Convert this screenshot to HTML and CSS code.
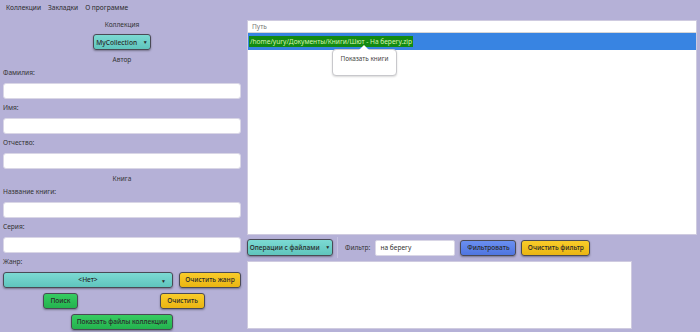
FILE: index.html
```html
<!DOCTYPE html>
<html lang="ru">
<head>
  <meta charset="UTF-8" />
  <title>Библиотека</title>
  <link rel="stylesheet" href="styles.css">
</head>
<body>
  <nav class="menubar">
    <span class="menu-item">Коллекции</span>
    <span class="menu-item">Закладки</span>
    <span class="menu-item">О программе</span>
  </nav>
  <div class="main">
    <!-- Search form -->
    <aside class="left">
      <div class="title first">Коллекция</div>
      <div class="center-row">
        <button class="btn teal collection-btn">MyCollection <span class="arrow">▼</span></button>
      </div>
      <div class="title">Автор</div>
      <label class="field-label tight">Фамилия:</label>
      <input class="field" type="text">
      <label class="field-label">Имя:</label>
      <input class="field" type="text">
      <label class="field-label">Отчество:</label>
      <input class="field" type="text">
      <div class="title">Книга</div>
      <label class="field-label tight">Название книги:</label>
      <input class="field" type="text">
      <label class="field-label">Серия:</label>
      <input class="field" type="text">
      <label class="field-label">Жанр:</label>
      <div class="genre-row">
        <button class="btn teal genre-combo"><span>&lt;Нет&gt;</span><span class="arrow combo-arrow">▼</span></button>
        <button class="btn yellow clear-genre">Очистить жанр</button>
      </div>
      <div class="search-row">
        <button class="btn green search-btn">Поиск</button>
        <button class="btn yellow clear-btn">Очистить</button>
      </div>
      <div class="center-row show-row">
        <button class="btn green show-btn">Показать файлы коллекции</button>
      </div>
    </aside>

    <!-- Files -->
    <section class="right">
      <div class="table">
        <div class="table-head">Путь</div>
        <div class="table-row selected">
          <span class="path-hl">/home/yury/Документы/Книги/Шют - На берегу.zip</span>
        </div>
        <div class="tooltip">Показать книги</div>
      </div>
      <div class="toolbar">
        <button class="btn teal ops-btn">Операции с файлами <span class="arrow">▼</span></button>
        <span class="separator"></span>
        <span class="filter-label">Фильтр:</span>
        <input class="filter-input" type="text" value="на берегу">
        <button class="btn blue filter-btn">Фильтровать</button>
        <button class="btn yellow clear-filter">Очистить фильтр</button>
      </div>
      <div class="books-box"></div>
    </section>
  </div>
</body>
</html>
```

FILE: styles.css
```css
* {
  margin: 0;
  padding: 0;
  box-sizing: border-box;
}

body {
  width: 700px;
  height: 332px;
  overflow: hidden;
  background: #b5b1d7;
  font-family: "Noto Sans", "Open Sans", sans-serif;
  font-size: 6.6px;
  line-height: 12px;
  color: #333;
}

/* Menu */
.menubar {
  display: flex;
  gap: 7px;
  height: 16px;
  padding: 0 6px;
  align-items: center;
}
.menu-item {
  line-height: 12px;
  color: #2a2a2a;
}

.main {
  display: flex;
}

/* Left panel */
.left {
  width: 244px;
  padding: 3px 3px 0 3px;
  display: flex;
  flex-direction: column;
}
.title {
  text-align: center;
  line-height: 12px;
  height: 12px;
  margin-top: 4px;
  color: #333;
}
.title.first {
  margin-top: 0;
}
.center-row {
  display: flex;
  justify-content: center;
  margin-top: 3px;
}
.field-label {
  display: block;
  line-height: 12px;
  height: 12px;
  margin-top: 3px;
  color: #333;
}
.field-label.tight {
  margin-top: 1px;
}
.field {
  display: block;
  width: 238px;
  height: 16px;
  margin-top: 4px;
  border: 1px solid #d9d6e6;
  border-radius: 3px;
  background: #fff;
  outline: none;
}

/* Buttons */
.btn {
  font-family: inherit;
  font-size: 6.6px;
  font-weight: 500;
  line-height: 12px;
  height: 16px;
  border: 1px solid #4a4a55;
  border-radius: 3px;
  color: #2a2a2a;
  cursor: pointer;
  box-shadow: 0 1px 2px rgba(0, 0, 0, 0.35);
  padding: 0;
  white-space: nowrap;
}
.teal {
  background: linear-gradient(#7cdad3, #5fc5bd);
}
.yellow {
  background: linear-gradient(#f9cc2a, #eab512);
}
.green {
  background: linear-gradient(#36cc62, #24b24e);
}
.blue {
  background: linear-gradient(#6a8ff0, #4f75e0);
}
.arrow {
  font-size: 5px;
  margin-left: 4px;
  vertical-align: 1px;
}

.collection-btn {
  width: 58px;
}

.genre-row {
  display: flex;
  justify-content: space-between;
  margin-top: 4px;
}
.genre-combo {
  width: 170px;
  display: flex;
  align-items: center;
  justify-content: center;
  position: relative;
}
.combo-arrow {
  position: absolute;
  right: 6px;
  top: 2px;
}
.clear-genre {
  width: 62px;
}
.search-row {
  display: flex;
  margin-top: 5px;
  padding-left: 40px;
}
.search-btn {
  width: 35px;
}
.clear-btn {
  width: 45px;
  margin-left: 82px;
}
.show-row {
  margin-top: 5px;
}
.show-btn {
  width: 102px;
}

/* Right panel */
.right {
  flex: 1;
  padding: 4px 3px 0 3px;
  display: flex;
  flex-direction: column;
}
.table {
  position: relative;
  height: 215px;
  background: #fff;
  border: 1px solid #cfcbe0;
}
.table-head {
  height: 12px;
  line-height: 11px;
  padding-left: 4px;
  color: #777;
  border-bottom: 1px solid #d6d6d6;
}
.table-row.selected {
  height: 17px;
  background: #3884e2;
  display: flex;
  align-items: center;
  padding-left: 1px;
}
.path-hl {
  background: #138a13;
  color: #d6f5b0;
  line-height: 11px;
  padding: 0 1px;
}
.tooltip {
  position: absolute;
  left: 84px;
  top: 28px;
  width: 65px;
  height: 27px;
  background: #fff;
  border: 1px solid #c8c8cc;
  border-radius: 4px;
  box-shadow: 0 1px 2px rgba(0, 0, 0, 0.15);
  text-align: center;
  padding-top: 3px;
  font-size: 6.4px;
  color: #444;
}
.tooltip::before {
  content: "";
  position: absolute;
  left: 26px;
  top: -5px;
  border-left: 5px solid transparent;
  border-right: 5px solid transparent;
  border-bottom: 5px solid #fff;
}

.toolbar {
  display: flex;
  align-items: center;
  height: 17px;
  margin-top: 4px;
}
.ops-btn {
  width: 86px;
  height: 17px;
}
.separator {
  width: 1px;
  height: 21px;
  background: #c7c3e2;
  margin: 0 7px 0 4px;
}
.filter-label {
  color: #333;
}
.filter-input {
  width: 80px;
  height: 16px;
  margin-left: 5px;
  border: 1px solid #d9d6e6;
  border-radius: 2px;
  padding-left: 4px;
  font-family: inherit;
  font-size: 6.6px;
  color: #333;
  outline: none;
}
.filter-btn {
  width: 56px;
  margin-left: 5px;
}
.clear-filter {
  width: 69px;
  margin-left: 5px;
}

.books-box {
  width: 385px;
  height: 68px;
  margin-top: 5px;
  background: #fff;
  border: 1px solid #cfcbe0;
}
```
